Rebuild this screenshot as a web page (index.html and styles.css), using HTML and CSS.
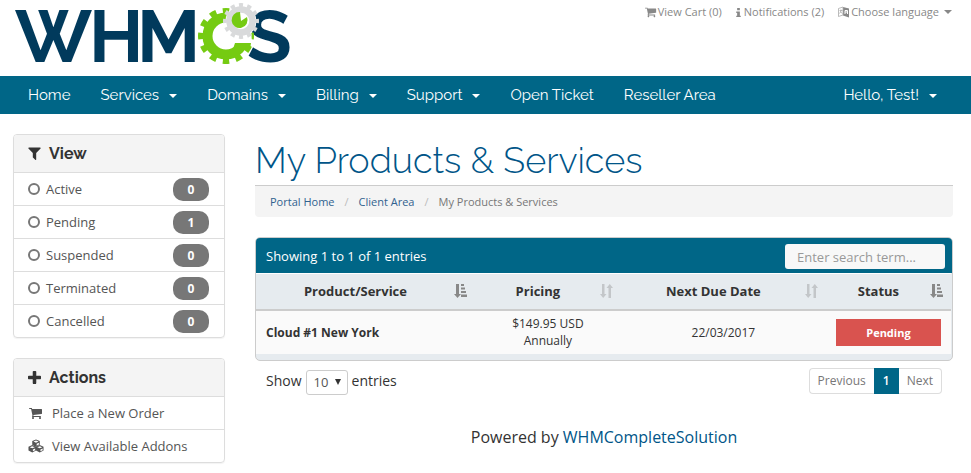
FILE: index.html
```
<!DOCTYPE html>
<html lang="en">
<head>
<meta charset="utf-8">
<title>My Products &amp; Services</title>
<link rel="stylesheet" href="styles.css">
</head>
<body>
<svg class="sprite" aria-hidden="true">
  <symbol id="cart" viewBox="0 0 1792 1792"><path d="M640 1536q0 52-38 90t-90 38-90-38-38-90 38-90 90-38 90 38 38 90zm896 0q0 52-38 90t-90 38-90-38-38-90 38-90 90-38 90 38 38 90zm128-1088v512q0 24-16.5 42.5t-40.5 21.5l-1044 122q13 60 13 70 0 16-24 64h920q26 0 45 19t19 45-19 45-45 19h-1024q-26 0-45-19t-19-45q0-11 8-31.5t16-36 21.5-40 15.5-29.5l-177-823h-204q-26 0-45-19t-19-45 19-45 45-19h256q16 0 28.5 6.5t19.5 15.5 13 24.5 8 26 5.5 29.5 4.5 26h1201q26 0 45 19t19 45z"/></symbol>
  <symbol id="sorted" viewBox="0 0 13 14"><path d="M2 0h3v10h2L3.500 14 0 10h2zM7 0h3v2H7zM7 3.500h4v2H7zM7 7h5v2H7zM7 10.500h6v2.500H7z"/></symbol>
  <symbol id="unsorted" viewBox="0 0 13 14"><path d="M2 0h2.500v10h2L3.200 14 0 10h2zM8.500 14H11V4h2L9.800 0 6.500 4h2z"/></symbol>
</svg>

<header class="top">
  <a class="logo" href="#" aria-label="WHMCS">
    <svg width="276" height="76" viewBox="14 0 276 76">
      <text class="logo-text" y="62" x="15 89 137">WHM</text>
      <text class="logo-text" y="62" x="247">S</text>
      <circle cx="226" cy="36" r="18.500" fill="none" stroke="#75cb12" stroke-width="10"/>
      <circle cx="226" cy="36" r="24.500" fill="none" stroke="#75cb12" stroke-width="7" pathLength="24" stroke-dasharray="1 1" stroke-dashoffset=".5"/>
      <path d="M226 36l5 9 4-2h17l-1-15z" fill="#fff"/>
      <path d="M235 43h16l-1 6h-17z" fill="#75cb12"/>
      <circle cx="241" cy="21" r="15.500" fill="#fff"/>
      <circle cx="241" cy="21" r="11.500" fill="none" stroke="#d9dadb" stroke-width="6.500"/>
      <circle cx="241" cy="21" r="16" fill="none" stroke="#d9dadb" stroke-width="4" pathLength="24" stroke-dasharray="1 1" stroke-dashoffset=".5"/>
      <path d="M241 21l6-4a8 8 0 1 1-7-5z" fill="#75cb12"/>
    </svg>
  </a>
  <nav class="tools" aria-label="Tools">
    <a href="#"><svg class="icon-s"><use href="#cart"/></svg>View Cart (0)</a>
    <a href="#"><svg class="icon-i" viewBox="0 0 5 10"><path d="M1 0h3v2.500H1zM0 4h4v4.500h1V10H0V8.500h1v-3H0z"/></svg>Notifications (2)</a>
    <a href="#"><svg class="icon-l" viewBox="0 0 12 12"><path d="M5 1l6 1.500v9L5 9.500z"/><path d="M7 8V4.500h2.500V8M7 6h2.500" fill="none" stroke="#fff"/><path d="M.5 2.500L5 1v8L.5 10.500zM1.500 4.500h3M3 3.500c.5 2-1 3-1.500 4M2 5.500l2.500 2" fill="none" stroke="#aaa" stroke-width=".8"/></svg>Choose language<span class="caret"></span></a>
  </nav>
</header>

<nav class="menu" aria-label="Main">
  <a href="#">Home</a>
  <a href="#">Services<span class="caret"></span></a>
  <a href="#">Domains<span class="caret"></span></a>
  <a href="#">Billing<span class="caret"></span></a>
  <a href="#">Support<span class="caret"></span></a>
  <a href="#">Open Ticket</a>
  <a href="#">Reseller Area</a>
  <a class="account" href="#">Hello, Test!<span class="caret"></span></a>
</nav>

<div class="page">
  <aside>
    <section class="panel">
      <h2><svg viewBox="192 192 1408 1472"><path d="M1595 295q17 41-14 70l-493 493v742q0 42-39 59-13 5-25 5-27 0-45-19l-256-256q-19-19-19-45v-486l-493-493q-31-29-14-70 17-39 59-39h1280q42 0 59 39z"/></svg>View</h2>
      <a href="#"><i class="ring"></i>Active<b>0</b></a>
      <a href="#"><i class="ring"></i>Pending<b>1</b></a>
      <a href="#"><i class="ring"></i>Suspended<b>0</b></a>
      <a href="#"><i class="ring"></i>Terminated<b>0</b></a>
      <a href="#"><i class="ring"></i>Cancelled<b>0</b></a>
    </section>
    <section class="panel">
      <h2><svg viewBox="192 128 1408 1408"><path d="M1600 736v192q0 40-28 68t-68 28h-416v416q0 40-28 68t-68 28h-192q-40 0-68-28t-28-68v-416h-416q-40 0-68-28t-28-68v-192q0-40 28-68t68-28h416v-416q0-40 28-68t68-28h192q40 0 68 28t28 68v416h416q40 0 68 28t28 68z"/></svg>Actions</h2>
      <a href="#"><svg class="act"><use href="#cart"/></svg>Place a New Order</a>
      <a href="#"><svg class="act" viewBox="0 0 17 14"><g id="cube"><path d="M8.500 0l4 1.800v4L8.500 8l-4-2.200v-4z"/><path d="M5.800 2.300l2.700-1.100 2.700 1.100-2.700 1.200zM9.200 4.600l2.400-1v1.900L9.200 6.700z" fill="#fff"/></g><use href="#cube" x="-4" y="6"/><use href="#cube" x="4" y="6"/></svg>View Available Addons</a>
    </section>
  </aside>

  <main>
    <h1>My Products &amp; Services</h1>
    <ol class="crumbs">
      <li><a href="#">Portal Home</a></li>
      <li><a href="#">Client Area</a></li>
      <li>My Products &amp; Services</li>
    </ol>

    <div class="list">
      <div class="bar">
        <span>Showing 1 to 1 of 1 entries</span>
        <input type="search" aria-label="Search" placeholder="Enter search term...">
      </div>
      <table>
        <thead>
          <tr>
            <th class="c1"><div><span>Product/Service</span><svg><use href="#sorted"/></svg></div></th>
            <th class="c2"><div><span>Pricing</span><svg class="dim"><use href="#unsorted"/></svg></div></th>
            <th class="c3"><div><span>Next Due Date</span><svg class="dim"><use href="#unsorted"/></svg></div></th>
            <th class="c4"><div><span>Status</span><svg><use href="#sorted"/></svg></div></th>
          </tr>
        </thead>
        <tbody>
          <tr>
            <td class="name">Cloud #1 New York</td>
            <td>$149.95 USD<br>Annually</td>
            <td>22/03/2017</td>
            <td><span class="status">Pending</span></td>
          </tr>
        </tbody>
      </table>
    </div>

    <div class="under">
      <div class="length">
        <label for="len">Show</label>
        <span class="pick"><select id="len"><option>10</option><option>25</option><option>50</option></select><svg viewBox="0 0 6 6"><path d="M0 0h6L3 6z"/></svg></span>
        <span>entries</span>
      </div>
      <nav class="pager" aria-label="Pages"><a href="#">Previous</a><a class="on" href="#">1</a><a href="#">Next</a></nav>
    </div>
    <p class="powered">Powered by <a href="#">WHMCompleteSolution</a></p>
  </main>
</div>
</body>
</html>
```
FILE: styles.css
```
* { box-sizing: border-box; }
body { margin: 0; background: #fff; color: #333; font: 13px/18px "Open Sans", sans-serif; }
a { color: inherit; text-decoration: none; }
svg { fill: currentColor; flex: none; }
.sprite { display: none; }
.caret { display: inline-block; border: 4px solid transparent; border-top-color: currentColor; border-bottom: 0; }

.top { display: flex; justify-content: space-between; height: 76px; padding: 0 19px 0 14px; }
.logo svg { display: block; overflow: visible; }
.logo-text { font: 700 73px Raleway, sans-serif; fill: #013a5c; }
.tools { display: flex; gap: 14px; padding-top: 3px; font-size: 11px; color: #888; }
.tools a { display: flex; align-items: center; height: 18px; }
.icon-s { width: 12px; height: 12px; margin-right: 1px; }
.icon-i { width: 5px; height: 9px; margin-right: 3px; }
.icon-l { width: 12px; height: 12px; margin-right: 1px; }
.tools .caret { margin-left: 5px; }

.menu { display: flex; background: #006687; color: #fff; padding: 0 19px 0 13px; font: 15px/38px Raleway, sans-serif; }
.menu a { padding: 0 15px; white-space: nowrap; }
.menu .caret { margin-left: 10px; vertical-align: 2px; }
.menu .account { margin-left: auto; }

.page { display: flex; gap: 30px; padding: 20px 18px 0 13px; }
aside { flex: 0 0 212px; }
.panel { border: 1px solid #ddd; border-radius: 4px; margin-bottom: 20px; overflow: hidden; box-shadow: 0 1px 1px rgba(0,0,0,.05); }
.panel h2 { display: flex; align-items: center; gap: 8px; height: 37px; margin: 0; padding: 0 14px; background: #f4f4f4; font: 700 16px/37px Raleway, sans-serif; }
.panel h2 svg { width: 13px; height: 13px; }
.panel a { display: flex; align-items: center; height: 33px; padding: 0 15px 0 14px; border-top: 1px solid #ddd; color: #555; }
.ring { width: 12px; height: 12px; margin-right: 6px; border: 2px solid #777; border-radius: 50%; }
.panel b { margin-left: auto; width: 36px; border-radius: 10px; background: #777; color: #fff; font-size: 12px; line-height: 23px; text-align: center; }
.act { width: 16px; height: 14px; margin-right: 8px; }

main { flex: 1; min-width: 0; }
h1 { margin: 0; height: 51px; font: 300 36px/52px Raleway, sans-serif; color: #058; }
.crumbs { display: flex; margin: 0 0 20px; padding: 0 15px; list-style: none; border-top: 1px solid #ccc; border-radius: 0 0 4px 4px; background: #f4f4f4; font-size: 11px; line-height: 31px; color: #777; }
.crumbs a { color: #31628f; }
.crumbs li + li::before { content: "/"; padding: 0 10px; color: #bbb; }

.list { border: 1px solid #ccc; border-radius: 5px; background: #e6ebef; padding-bottom: 6px; overflow: hidden; }
.bar { display: flex; align-items: center; justify-content: space-between; height: 35px; padding: 0 7px 0 10px; background: #006687; color: #fff; }
.bar input { width: 160px; height: 25px; margin-top: 2px; padding: 0 12px; border: 0; border-radius: 3px; background: #f8f8f8; font: 13px "Open Sans", sans-serif; color: #555; }
.bar input::placeholder { color: #999; }
table { width: calc(100% - 1px); table-layout: fixed; border-collapse: collapse; border-top: 1px solid #fff; text-align: center; }
.c1 { width: 31.5%; }
.c2 { width: 21%; }
.c3 { width: 29.5%; }
.c4 { width: 18%; }
th { height: 36px; padding: 0 8px 0 10px; border-bottom: 2px solid #ccc; }
th div { display: flex; align-items: center; gap: 9px; }
th span { flex: 1; }
th svg { width: 13px; height: 14px; color: #888; }
th .dim { color: #c3c6c9; }
td { height: 44px; padding: 0 10px; background: #fafafa; font-size: 12px; line-height: 17px; }
.name { text-align: left; font-weight: 700; }
.status { display: block; background: #d9534f; color: #fff; font-weight: 700; font-size: 11px; line-height: 27px; }

.under { display: flex; align-items: flex-start; justify-content: space-between; padding: 7px 11px 0; }
.length { display: flex; align-items: center; gap: 4px; padding-top: 2px; font-size: 14px; }
.length label, .length > span:last-child { margin-bottom: 2px; }
.pick { position: relative; color: #555; }
.pick select { display: block; appearance: none; width: 42px; height: 25px; padding: 0 7px; border: 1px solid #ccc; border-radius: 3px; background: #fff; color: #555; font: 13px "Open Sans", sans-serif; }
.pick svg { position: absolute; right: 7px; top: 9px; width: 6px; height: 6px; color: #333; pointer-events: none; }
.pager { display: flex; font-size: 12px; line-height: 24px; color: #777; }
.pager a { padding: 0 8px; border: 1px solid #ddd; }
.pager a:first-child { border-right: 0; border-radius: 4px 0 0 4px; }
.pager a:last-child { border-left: 0; border-radius: 0 4px 4px 0; }
.pager .on { border-color: #006687; background: #006687; color: #fff; font-weight: 600; }
.powered { margin: 31px 0 0; text-align: center; font-size: 16px; line-height: 22px; }
.powered a { color: #058; }
```
